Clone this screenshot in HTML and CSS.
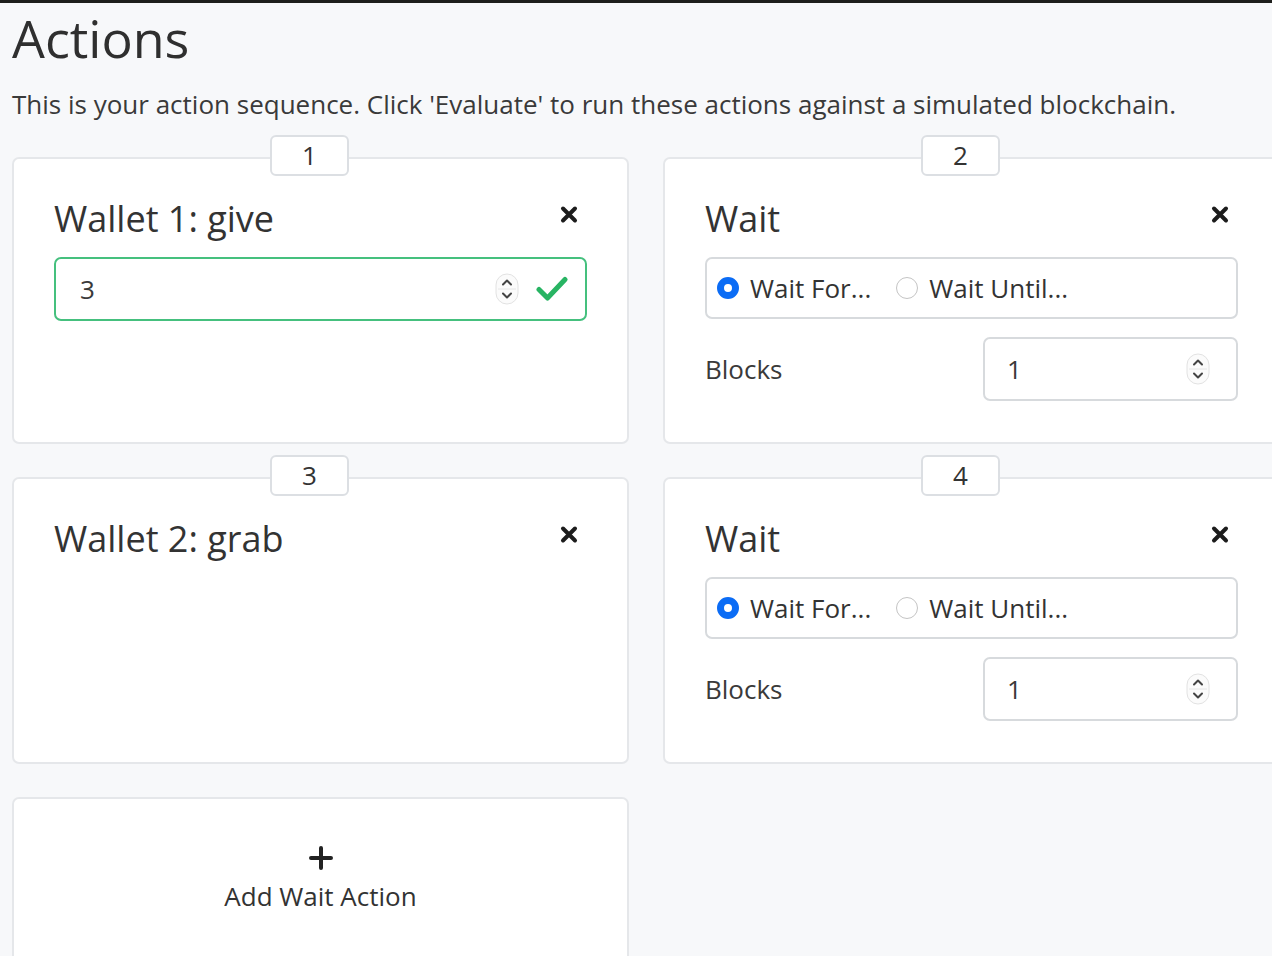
FILE: index.html
```html
<!DOCTYPE html>
<html>
<head>
<meta charset="utf-8">
<link rel="stylesheet" href="styles.css">
</head>
<body>
<div class="topbar"></div>
<div class="page">
  <h1 class="heading">Actions</h1>
  <p class="intro">This is your action sequence. Click 'Evaluate' to run these actions against a simulated blockchain.</p>
  <div class="grid">
    <div class="card">
      <div class="badge">1</div>
      <div class="card-head">
        <h2 class="card-title">Wallet 1: give</h2>
        <span class="close"><svg width="18" height="19" viewBox="0 0 18 19"><path d="M3 3.5 L15 15.5 M15 3.5 L3 15.5" stroke="#1c1c1c" stroke-width="4" stroke-linecap="round"/></svg></span>
      </div>
      <div class="num-input valid">
        <span class="num-value">3</span>
        <span class="spinner"><svg width="24" height="32" viewBox="0 0 24 32"><rect x="1" y="1" width="22" height="30" rx="11" fill="#fbfbfb" stroke="#e2e2e2" stroke-width="1"/><line x1="3" y1="16" x2="21" y2="16" stroke="#e6e6e6" stroke-width="1"/><path d="M8 11.5 L12 7.5 L16 11.5" fill="none" stroke="#444" stroke-width="2" stroke-linecap="round" stroke-linejoin="round"/><path d="M8 20.5 L12 24.5 L16 20.5" fill="none" stroke="#444" stroke-width="2" stroke-linecap="round" stroke-linejoin="round"/></svg></span>
        <span class="check"><svg width="32" height="26" viewBox="0 0 32 26"><path d="M3 13.5 L11.5 22 L29 3.5" fill="none" stroke="#28b463" stroke-width="5" stroke-linecap="round" stroke-linejoin="round"/></svg></span>
      </div>
    </div>

    <div class="card">
      <div class="badge">2</div>
      <div class="card-head">
        <h2 class="card-title">Wait</h2>
        <span class="close"><svg width="18" height="19" viewBox="0 0 18 19"><path d="M3 3.5 L15 15.5 M15 3.5 L3 15.5" stroke="#1c1c1c" stroke-width="4" stroke-linecap="round"/></svg></span>
      </div>
      <div class="radio-box">
        <span class="radio on"></span><span class="radio-label">Wait For...</span>
        <span class="radio off"></span><span class="radio-label">Wait Until...</span>
      </div>
      <div class="field-row">
        <span class="field-label">Blocks</span>
        <div class="num-input small">
          <span class="num-value">1</span>
          <span class="spinner"><svg width="24" height="32" viewBox="0 0 24 32"><rect x="1" y="1" width="22" height="30" rx="11" fill="#fbfbfb" stroke="#e2e2e2" stroke-width="1"/><line x1="3" y1="16" x2="21" y2="16" stroke="#e6e6e6" stroke-width="1"/><path d="M8 11.5 L12 7.5 L16 11.5" fill="none" stroke="#444" stroke-width="2" stroke-linecap="round" stroke-linejoin="round"/><path d="M8 20.5 L12 24.5 L16 20.5" fill="none" stroke="#444" stroke-width="2" stroke-linecap="round" stroke-linejoin="round"/></svg></span>
        </div>
      </div>
    </div>

    <div class="card">
      <div class="badge">3</div>
      <div class="card-head">
        <h2 class="card-title">Wallet 2: grab</h2>
        <span class="close"><svg width="18" height="19" viewBox="0 0 18 19"><path d="M3 3.5 L15 15.5 M15 3.5 L3 15.5" stroke="#1c1c1c" stroke-width="4" stroke-linecap="round"/></svg></span>
      </div>
    </div>

    <div class="card">
      <div class="badge">4</div>
      <div class="card-head">
        <h2 class="card-title">Wait</h2>
        <span class="close"><svg width="18" height="19" viewBox="0 0 18 19"><path d="M3 3.5 L15 15.5 M15 3.5 L3 15.5" stroke="#1c1c1c" stroke-width="4" stroke-linecap="round"/></svg></span>
      </div>
      <div class="radio-box">
        <span class="radio on"></span><span class="radio-label">Wait For...</span>
        <span class="radio off"></span><span class="radio-label">Wait Until...</span>
      </div>
      <div class="field-row">
        <span class="field-label">Blocks</span>
        <div class="num-input small">
          <span class="num-value">1</span>
          <span class="spinner"><svg width="24" height="32" viewBox="0 0 24 32"><rect x="1" y="1" width="22" height="30" rx="11" fill="#fbfbfb" stroke="#e2e2e2" stroke-width="1"/><line x1="3" y1="16" x2="21" y2="16" stroke="#e6e6e6" stroke-width="1"/><path d="M8 11.5 L12 7.5 L16 11.5" fill="none" stroke="#444" stroke-width="2" stroke-linecap="round" stroke-linejoin="round"/><path d="M8 20.5 L12 24.5 L16 20.5" fill="none" stroke="#444" stroke-width="2" stroke-linecap="round" stroke-linejoin="round"/></svg></span>
        </div>
      </div>
    </div>

    <div class="card add-card">
      <svg class="plus" width="24" height="24" viewBox="0 0 24 24"><path d="M12 2 L12 22 M2 12 L22 12" stroke="#222" stroke-width="4" stroke-linecap="round"/></svg>
      <span class="add-label">Add Wait Action</span>
    </div>
  </div>
</div>
</body>
</html>
```

FILE: styles.css
```css
html, body {
  margin: 0;
  padding: 0;
  overflow: hidden;
  background: #f7f8fa;
}
body {
  font-family: "Open Sans", "Noto Sans", sans-serif;
  color: #333;
  width: 1272px;
  height: 956px;
}
.topbar {
  height: 3px;
  background: #1e1f1c;
}
.page {
  padding: 0 12px;
}
.heading {
  margin: 4px 0 0;
  font-size: 52px;
  line-height: 61px;
  font-weight: 400;
  color: #2f2f2f;
}
.intro {
  margin: 20px 0 0;
  font-size: 26px;
  line-height: 33px;
  color: #3a3a3a;
}
.grid {
  margin-top: 36px;
  display: grid;
  grid-template-columns: 617px 617px;
  column-gap: 34px;
  row-gap: 33px;
}
.card {
  position: relative;
  box-sizing: border-box;
  height: 287px;
  background: #fff;
  border: 2px solid #e5e7ea;
  border-radius: 7px;
  padding: 38px 40px 0 40px;
}
.badge {
  position: absolute;
  top: -24px;
  left: 256px;
  box-sizing: border-box;
  width: 79px;
  height: 41px;
  background: #fff;
  border: 2px solid #dcdfe3;
  border-radius: 6px;
  font-size: 26px;
  line-height: 37px;
  text-align: center;
  color: #333;
}
.card-head {
  display: flex;
  justify-content: space-between;
  align-items: flex-start;
  height: 44px;
}
.card-title {
  margin: 0;
  font-size: 36px;
  line-height: 44px;
  font-weight: 400;
  color: #333;
}
.close {
  display: block;
  margin-top: 8px;
  margin-right: 9px;
  height: 19px;
}
.close svg { display: block; }
.num-input {
  box-sizing: border-box;
  margin-top: 16px;
  height: 64px;
  border: 2px solid #d7dadd;
  border-radius: 7px;
  display: flex;
  align-items: center;
  padding: 0 17px 0 24px;
  background: #fff;
}
.num-input.valid {
  border-color: #45c07e;
}
.num-value {
  flex: 1;
  font-size: 26px;
  color: #3a3a3a;
}
.spinner {
  display: block;
  height: 32px;
}
.spinner svg { display: block; }
.check {
  display: block;
  margin-left: 17px;
  height: 26px;
}
.check svg { display: block; }
.radio-box {
  box-sizing: border-box;
  margin-top: 16px;
  height: 62px;
  border: 2px solid #d7dadd;
  border-radius: 7px;
  display: flex;
  align-items: center;
  padding-left: 10px;
}
.radio {
  box-sizing: border-box;
  width: 22px;
  height: 22px;
  border-radius: 50%;
  flex: none;
}
.radio.on {
  border: 7px solid #0b6cf5;
  background: #fff;
}
.radio.off {
  border: 1.5px solid #c4c4c4;
  background: #fff;
  margin-left: 25px;
}
.radio-label {
  margin-left: 11px;
  font-size: 26px;
  color: #333;
}
.field-row {
  margin-top: 18px;
  display: flex;
  align-items: center;
  justify-content: space-between;
}
.field-label {
  font-size: 26px;
  color: #3a3a3a;
}
.num-input.small {
  margin-top: 0;
  width: 255px;
  padding-left: 22px;
  padding-right: 26px;
}
.add-card {
  display: flex;
  flex-direction: column;
  align-items: center;
  padding-top: 47px;
}
.plus {
  display: block;
}
.add-label {
  margin-top: 8px;
  font-size: 26px;
  color: #333;
}
```
